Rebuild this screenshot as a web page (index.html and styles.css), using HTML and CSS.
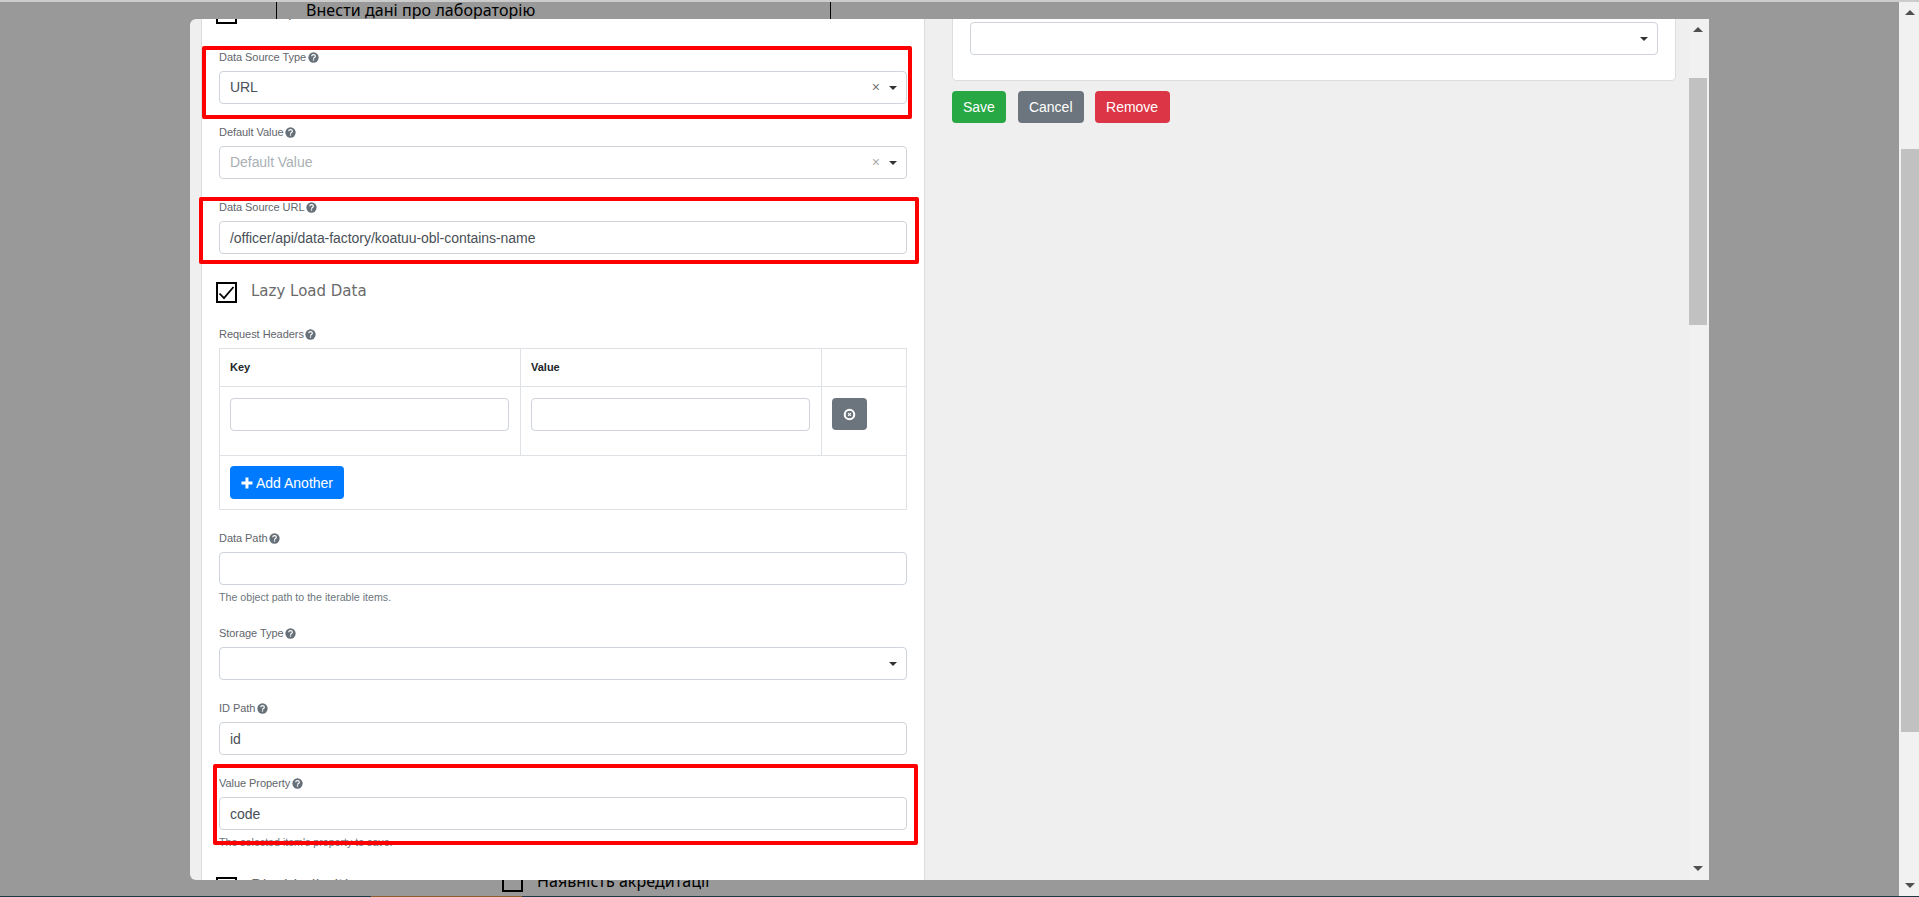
FILE: index.html
```html
<!DOCTYPE html>
<html lang="uk">
<head>
<meta charset="utf-8">
<title>Form builder</title>
<link rel="stylesheet" href="styles.css">
</head>
<body>
<svg class="defs" width="0" height="0" aria-hidden="true">
  <symbol id="help" viewBox="0 0 12 12">
    <circle cx="6" cy="6" r="5.6" fill="#667079"/>
    <path d="M4 4.7c.1-1.2 1-1.8 2-1.8 1.2 0 2 .7 2 1.6 0 1.5-2 1.4-2 2.8" fill="none" stroke="#fff" stroke-width="1.3"/>
    <rect x="5.3" y="8" width="1.4" height="1.4" fill="#fff"/>
  </symbol>
  <symbol id="tick" viewBox="0 0 17 17">
    <path d="M1.5 9.5l4.5 4.7L15.5 3" fill="none" stroke="#000" stroke-width="1.8"/>
  </symbol>
</svg>

<div class="behind">
  <div class="behind-strip"></div>
  <div class="behind-title">Внести дані про лабораторію</div>
  <div class="behind-row"><span class="check"></span><span>Наявність акредитації</span></div>
  <div class="behind-line"><span class="behind-tab"></span></div>
</div>
<div class="overlay"></div>

<div class="page-scroll">
  <span class="arrow-up"></span>
  <span class="page-thumb"></span>
  <span class="arrow-down"></span>
</div>

<main class="modal">
  <section class="panel-left">
    <div class="check-row check-row-first"><span class="check"></span><span class="check-text">Multiple Values</span></div>

    <div class="group">
      <label class="lbl">Data Source Type <svg class="help"><use href="#help"/></svg></label>
      <div class="control select"><span class="grow">URL</span><span class="clear">×</span><span class="caret"></span></div>
    </div>
    <div class="group">
      <label class="lbl">Default Value <svg class="help"><use href="#help"/></svg></label>
      <div class="control select"><span class="grow placeholder">Default Value</span><span class="clear clear-light">×</span><span class="caret"></span></div>
    </div>
    <div class="group group-url">
      <label class="lbl">Data Source URL <svg class="help"><use href="#help"/></svg></label>
      <input class="control" type="text" value="/officer/api/data-factory/koatuu-obl-contains-name" readonly>
    </div>

    <div class="check-row check-row-lazy"><span class="check"><svg class="tick"><use href="#tick"/></svg></span><span class="check-text">Lazy Load Data</span></div>

    <div class="group">
      <label class="lbl">Request Headers <svg class="help"><use href="#help"/></svg></label>
      <table class="headers">
        <colgroup><col class="col-main"><col class="col-main"><col class="col-action"></colgroup>
        <thead><tr><th>Key</th><th>Value</th><th></th></tr></thead>
        <tbody>
          <tr class="row-input">
            <td><input class="control" type="text" readonly></td>
            <td><input class="control" type="text" readonly></td>
            <td><button class="btn btn-icon" type="button"><svg width="13" height="13" viewBox="0 0 12 12"><circle cx="6" cy="6" r="4.4" fill="none" stroke="#fff" stroke-width="1.9"/><path d="M4.7 4.7l2.6 2.6M7.3 4.7L4.7 7.3" stroke="#fff" stroke-width="1"/></svg></button></td>
          </tr>
          <tr class="row-add">
            <td colspan="3"><button class="btn btn-primary" type="button"><svg width="12" height="12" viewBox="0 0 12 12"><path d="M6 .5v11M.5 6h11" stroke="#fff" stroke-width="3"/></svg><span>Add Another</span></button></td>
          </tr>
        </tbody>
      </table>
    </div>

    <div class="group">
      <label class="lbl">Data Path <svg class="help"><use href="#help"/></svg></label>
      <input class="control" type="text" readonly>
      <p class="hint">The object path to the iterable items.</p>
    </div>
    <div class="group">
      <label class="lbl">Storage Type <svg class="help"><use href="#help"/></svg></label>
      <div class="control select"><span class="grow"></span><span class="caret"></span></div>
    </div>
    <div class="group">
      <label class="lbl">ID Path <svg class="help"><use href="#help"/></svg></label>
      <input class="control" type="text" value="id" readonly>
    </div>
    <div class="group">
      <label class="lbl">Value Property <svg class="help"><use href="#help"/></svg></label>
      <input class="control" type="text" value="code" readonly>
      <p class="hint">The selected item's property to save.</p>
    </div>

    <div class="check-row check-row-last"><span class="check"></span><span class="check-text">Disable limiting response</span></div>
  </section>

  <section class="panel-right">
    <div class="card">
      <div class="control select"><span class="grow"></span><span class="caret"></span></div>
    </div>
    <div class="actions">
      <button class="btn btn-save" type="button">Save</button>
      <button class="btn btn-cancel" type="button">Cancel</button>
      <button class="btn btn-remove" type="button">Remove</button>
    </div>
  </section>

  <aside class="modal-scroll">
    <span class="arrow-up"></span>
    <span class="modal-thumb"></span>
    <span class="arrow-down"></span>
  </aside>
</main>

<div class="mark mark-type"></div>
<div class="mark mark-url"></div>
<div class="mark mark-value"></div>
</body>
</html>
```
FILE: styles.css
```css
* { box-sizing: border-box; }
html, body { margin: 0; height: 100%; overflow: hidden; }
body {
  position: relative;
  width: 1919px;
  height: 897px;
  background: #fff;
  font-family: "Liberation Sans", Arial, sans-serif;
  font-size: 14px;
  color: #495057;
}
.defs { position: absolute; }

/* page behind the dialog */
.behind {
  display: flex;
  flex-direction: column;
  height: 897px;
  font-family: "Noto Sans", sans-serif;
  font-size: 16px;
  letter-spacing: .07px;
  color: #000;
}
.behind-strip { height: 2px; background: #ccc; }
.behind-title {
  width: 555px;
  height: 17px;
  margin-left: 276px;
  padding-left: 29px;
  border-left: 1px solid #000;
  border-right: 1px solid #000;
  line-height: 16px;
  white-space: nowrap;
}
.behind-row {
  display: flex;
  align-items: flex-end;
  gap: 14px;
  margin-top: auto;
  margin-bottom: 4px;
  padding-left: 502px;
  line-height: 22px;
}
.behind-line { height: 1px; background: #325f72; padding-left: 371px; }
.behind-tab { display: block; width: 151px; height: 1px; background: #e8a050; }

.overlay {
  position: absolute;
  left: 0;
  top: 2px;
  right: 0;
  bottom: 0;
  background: rgba(0, 0, 0, .4);
}

/* scrollbars */
.page-scroll, .modal-scroll {
  display: flex;
  flex-direction: column;
  background: #f1f1f1;
}
.page-scroll {
  position: absolute;
  left: 1899px;
  top: 2px;
  width: 20px;
  height: 894px;
  padding: 8px 0;
}
.modal-scroll { flex: none; width: 20px; padding: 8px 0 9px; }
.arrow-up, .arrow-down {
  display: block;
  flex: none;
  width: 0;
  height: 0;
  border-left: 5px solid transparent;
  border-right: 5px solid transparent;
}
.arrow-up { border-bottom: 5px solid #505050; }
.arrow-down { border-top: 5px solid #505050; margin-top: auto; }
.page-scroll .arrow-up, .page-scroll .arrow-down { margin-left: 6px; }
.modal-scroll .arrow-up, .modal-scroll .arrow-down { margin-left: 4px; }
.page-thumb {
  display: block;
  width: 18px;
  height: 583px;
  margin: 134px 0 0 2px;
  background: #c1c1c1;
}
.modal-thumb {
  display: block;
  width: 18px;
  height: 247px;
  margin-top: 46px;
  background: #c1c1c1;
}

/* dialog */
.modal {
  position: absolute;
  left: 190px;
  top: 19px;
  display: flex;
  width: 1519px;
  height: 861px;
  padding-left: 11px;
  border-radius: 6px 0 0 6px;
  background: #efefef;
  overflow: hidden;
}
.panel-left {
  flex: none;
  width: 724px;
  height: 1000px;
  padding: 0 17px;
  background: #fff;
  border-left: 1px solid #ddd;
  border-right: 1px solid #ddd;
}
.panel-right { flex: 1; min-width: 0; padding-left: 27px; }

/* form */
.check-row {
  display: flex;
  align-items: center;
  height: 21px;
  margin-left: -3px;
  font-family: "DejaVu Sans", sans-serif;
  font-size: 15px;
  color: #6b6b6b;
}
.check-row-first { margin-top: -16px; margin-bottom: 25px; }
.check-row-lazy { margin-top: 28px; margin-bottom: 23px; }
.check-row-last { margin-top: 27px; }
.check {
  display: flex;
  align-items: center;
  justify-content: center;
  flex: none;
  width: 21px;
  height: 21px;
  background: #fff;
  border: 2px solid #000;
}
.tick { width: 17px; height: 17px; }
.check-text { margin: 0 0 4px 14px; white-space: nowrap; }

.group { margin-bottom: 20px; }
.group-url { margin-bottom: 0; }
.lbl {
  display: block;
  height: 16px;
  margin-bottom: 6px;
  font-size: 11px;
  letter-spacing: -.05px;
  line-height: 16px;
  color: #5f666c;
}
.help { width: 11px; height: 11px; margin-left: -1.5px; vertical-align: -1.5px; }
.control {
  display: block;
  width: 100%;
  height: 33px;
  padding: 0 10px;
  background: #fff;
  border: 1px solid #ced4da;
  border-radius: 4px;
  font-family: "Liberation Sans", Arial, sans-serif;
  font-size: 14px;
  letter-spacing: -.05px;
  line-height: 31px;
  color: #495057;
  outline: none;
}
.select { display: flex; align-items: center; padding-right: 9px; }
.grow { flex: 1; }
.placeholder { color: #aab0b5; }
.clear { margin-right: 9px; font-size: 14px; color: #777; }
.clear-light { color: #aaa; }
.caret {
  flex: none;
  width: 0;
  height: 0;
  border-left: 4.5px solid transparent;
  border-right: 4.5px solid transparent;
  border-top: 4.5px solid #333;
}
.hint {
  margin: 5px 0 0;
  height: 15px;
  font-size: 10.65px;
  line-height: 15px;
  color: #6c757d;
}

/* headers table */
.headers {
  width: 687px;
  table-layout: fixed;
  border-collapse: collapse;
  font-size: 11px;
}
.col-main { width: 301px; }
.col-action { width: 85px; }
.headers th, .headers td {
  padding: 10px;
  border: 1px solid #dee2e6;
  vertical-align: top;
  text-align: left;
}
.headers th { height: 38px; color: #212529; line-height: 16px; }
.headers .control { width: calc(100% - 1px); }
.headers .row-input td { height: 69px; padding-top: 11px; }
.row-add td { height: 54px; }

/* buttons */
.btn {
  display: inline-flex;
  align-items: center;
  justify-content: center;
  height: 32px;
  padding: 0 11px;
  border: 0;
  border-radius: 4px;
  font-family: "Liberation Sans", Arial, sans-serif;
  font-size: 14px;
  white-space: nowrap;
  color: #fff;
}
.btn-icon { width: 35px; padding: 0; background: #6c757d; }
.btn-primary {
  justify-content: flex-start;
  gap: 3px;
  width: 114px;
  height: 33px;
  background: #007bff;
}
.btn-save { background: #28a745; }
.btn-cancel { background: #6c757d; }
.btn-remove { margin-left: -1px; padding: 0 11.5px; background: #dc3545; }

/* right column */
.card {
  width: 724px;
  margin: -20px 0 10px;
  padding: 22px 17px 25px;
  background: #fff;
  border: 1px solid #ddd;
  border-radius: 4px;
}
.actions { display: flex; gap: 12px; }

/* red annotation frames drawn over the screenshot */
.mark {
  position: absolute;
  border: 4px solid #f00;
  border-radius: 2px;
}
.mark-type { left: 202px; top: 46px; width: 710px; height: 73px; }
.mark-url { left: 199px; top: 197px; width: 720px; height: 67px; }
.mark-value { left: 213px; top: 764px; width: 705px; height: 81px; }
```
